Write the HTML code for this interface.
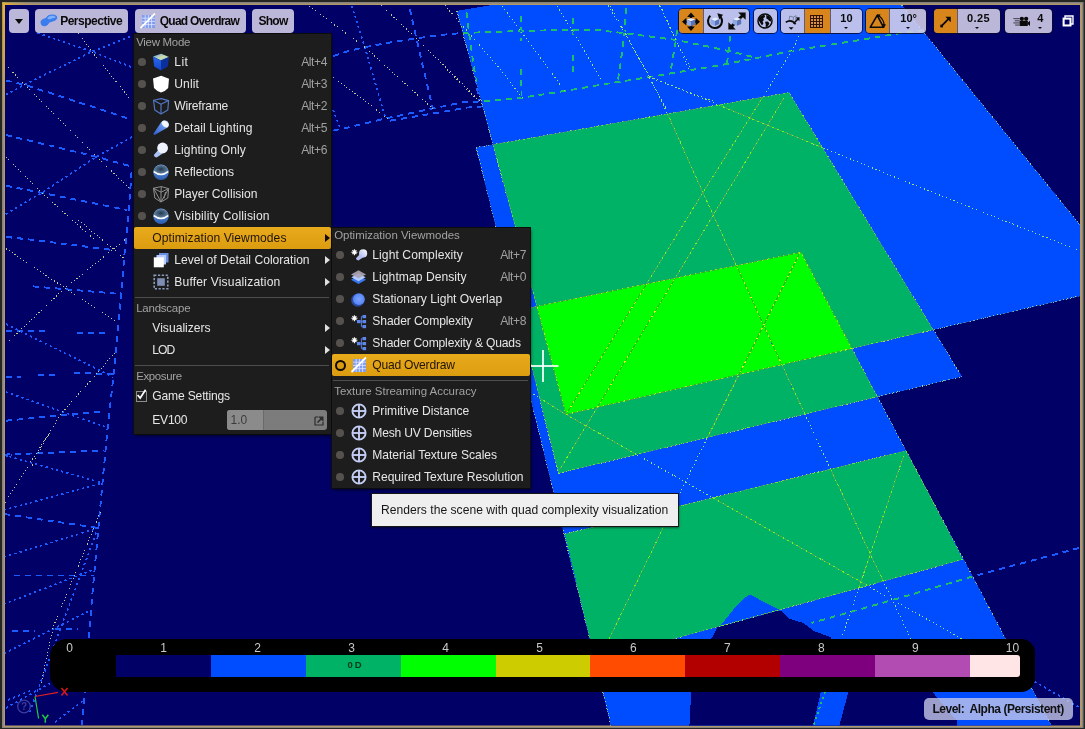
<!DOCTYPE html>
<html>
<head>
<meta charset="utf-8">
<title>Quad Overdraw Viewport</title>
<style>
html,body{margin:0;padding:0;}
body{width:1085px;height:729px;overflow:hidden;background:#262622;position:relative;font-family:"Liberation Sans",sans-serif;font-size:12px;}
#scene{position:absolute;left:0;top:0;}
.abs{position:absolute;}
#ui{position:absolute;left:0;top:0;width:1085px;height:729px;will-change:transform;}
/* toolbar */
.tb{position:absolute;top:9px;height:24px;border-radius:4px;background:rgba(212,208,232,0.88);box-sizing:border-box;overflow:hidden;}
.tb.dk{box-shadow:0 0 0 1px rgba(10,10,40,0.85);}
.tbt{position:absolute;top:0.9px;height:24px;line-height:23px;font-weight:bold;font-size:12px;color:#0a0a0a;white-space:pre;letter-spacing:-0.5px;}
.seg{position:absolute;top:0;height:24px;}
.or{background:#d8861c;box-shadow:0 0 0 1px rgba(20,10,40,0.55);}
.num{position:absolute;top:0;height:24px;text-align:center;font-weight:bold;font-size:11px;color:#0a0a0a;line-height:19px;}
.dn{position:absolute;width:0;height:0;border-left:2.6px solid transparent;border-right:2.6px solid transparent;border-top:2.8px solid #0a0a0a;top:18px;}
/* menus */
.menu{position:absolute;background:#1d1d1d;box-shadow:0 0 0 1px #0c0c0c, 1px 2px 3px rgba(0,0,0,0.6);color:#e6e6e6;}
.hdr{position:absolute;left:2.2px;font-size:11.45px;color:#a2a2a2;white-space:pre;line-height:12px;}
.row{position:absolute;left:0;right:0;height:22px;}
.row .dot{position:absolute;left:4.2px;top:7.2px;width:7.6px;height:7.6px;border-radius:50%;background:#55514f;}
.row .ic{position:absolute;left:19px;top:3px;width:16px;height:16px;overflow:visible;}
.row .tx{position:absolute;left:40.3px;top:0.7px;line-height:21px;white-space:pre;font-size:12.1px;}
.row .tx2{position:absolute;left:18.3px;top:0.7px;line-height:21px;white-space:pre;font-size:12.1px;}
.row .sc{position:absolute;right:4px;top:0.7px;line-height:21px;color:#a0a0a0;font-size:12.1px;letter-spacing:-0.42px;}
.row .ar{position:absolute;right:1.5px;top:7px;width:0;height:0;border-top:4px solid transparent;border-bottom:4px solid transparent;border-left:5px solid #e0e0e0;}
.row.hl{background:linear-gradient(#e8ab1c,#dc9c10);border-radius:2px;color:#20140a;}
.row.hl .ar{border-left-color:#120a04;}
.sep{position:absolute;left:1px;right:2px;height:1px;background:#4e4e4e;}
</style>
</head>
<body>
<svg id="scene" width="1085" height="729" viewBox="0 0 1085 729">
<defs>
  <clipPath id="vp"><rect x="5" y="5" width="1075" height="720.5"/></clipPath>
  <polygon id="pA" points="456.8,10.8 491.5,5 901.7,5 1128.5,284.7 566,414.5"/>
  <polygon id="pB" points="476,147.6 789,92.4 961.8,376.6 558.6,473.3"/>
  <polygon id="pC" points="509.4,312 801,252.3 1051.5,725.5 611,725.5"/>
  <polygon id="pD" points="564.9,534 907.3,450.3 962.8,559.5 595.1,660.5"/>
  <clipPath id="cA"><use href="#pA"/></clipPath>
  <clipPath id="cB"><use href="#pB"/></clipPath>
  <clipPath id="cC"><use href="#pC"/></clipPath>
  <clipPath id="cD"><use href="#pD"/></clipPath>
</defs>
<!-- frame -->
<rect x="0" y="0" width="1085" height="729" fill="#262622"/>
<rect x="2" y="2" width="1081.5" height="726" fill="#858280"/>
<rect x="3.5" y="3.5" width="1078.5" height="723.5" fill="#b09868"/>
<defs><linearGradient id="gl" x1="0" y1="0" x2="0" y2="1"><stop offset="0" stop-color="#eab22c"/><stop offset="0.35" stop-color="#d8a640" stop-opacity="0.9"/><stop offset="1" stop-color="#b09868" stop-opacity="0"/></linearGradient><linearGradient id="gt" x1="0" y1="0" x2="1" y2="0"><stop offset="0" stop-color="#eab22c"/><stop offset="1" stop-color="#b09868" stop-opacity="0"/></linearGradient></defs>
<rect x="2.6" y="2.6" width="2.6" height="150" fill="url(#gl)"/><rect x="2.6" y="2.6" width="34" height="2.6" fill="url(#gt)"/>
<g clip-path="url(#vp)" shape-rendering="crispEdges">
  <rect x="5" y="5" width="1075" height="721" fill="#000066"/>
  <!-- single planes : blue -->
  <use href="#pA" fill="#004cff"/>
  <use href="#pB" fill="#004cff"/>
  <use href="#pC" fill="#004cff"/>
  <!-- double overlaps : green -->
  <g clip-path="url(#cA)"><use href="#pB" fill="#00b266"/><use href="#pC" fill="#00b266"/></g>
  <g clip-path="url(#cB)"><use href="#pC" fill="#00b266"/></g>
  <g clip-path="url(#cC)"><use href="#pD" fill="#00b266"/></g>
  <!-- triple -->
  <g clip-path="url(#cA)"><g clip-path="url(#cB)"><use href="#pC" fill="#00ff00"/></g></g>
  <!-- character silhouette -->
  <polygon points="710.7,640 720.4,625.7 737,605 748,595.3 750.8,594.5 759,599.4 770,605 778.4,609 781,610.5 832,640" fill="#004cff"/>
  <polygon points="710.7,640 717.6,627 778.4,610.5 781,610.5 789.5,618.8 803.3,623 814.4,631.2 831,637.3 832,640" fill="#000066"/>
  <polygon points="691.3,690 930.7,690 957,721 957,726 689.4,726" fill="#000066"/>
  <polygon points="821.3,690 849,690 839.2,726 813,726" fill="#004cff"/>
</g>
<g id="wires" clip-path="url(#vp)" fill="none">
<defs>
<g id="wth" stroke-width="1.9" stroke-dasharray="6 5"><polyline points="333,56 349,51 365,47.2 388,42.8 416,38.4 440,35 462,33 521,31 573,29.8 600,30.4 625,33.2 650,36.5 676,40 703,45.5 728.6,51 757.6,58"/><polyline points="333,130.6 344,128.4 385.6,118.5 431.7,108.7 464.7,102 479.5,101.5 521.5,97.8 567,90.6 603,84.4 648.5,77.2 686.8,70.7 721.6,65 757,58 790.8,51 860,40 900,33.2 925,30"/><polyline points="390,120.7 436,113 466.8,107.6 482,106.5"/><polyline points="409.8,8.8 416.4,38.4 432.8,108.7"/><polyline points="466.4,12 470,40 476,81.5 479,101"/><polyline points="521,15.6 521,40.7"/><polyline points="521.3,69.5 521.5,98"/><polyline points="573,18 573,36"/><polyline points="573,55 573,73"/><polyline points="626,8 624.5,33 621,60 618,80"/><polyline points="677,30 676,40 672.5,60 670.5,72"/><polyline points="730,36 728.6,51 727,63.6"/><polyline points="131.5,172 131,180 127,232 125,248 118,330 113,380 107.4,430 102.5,483 98.4,528 94.3,573 91,610 84,700 82,725"/><polyline points="5.8,80.4 24.5,84.7 131,119.3"/><polyline points="5.8,135 96.5,156.8 132.5,166.8"/><polyline points="5.8,185.6 41.8,192.8 126.8,210"/><polyline points="5.8,237 28,239.5"/><polyline points="6,236.6 113,250"/><polyline points="33,286.4 120.7,294"/><polyline points="6,331 45,331"/><polyline points="77,333 107,333"/><polyline points="6,377 21,377"/><polyline points="37.7,374.8 56,374.8"/><polyline points="74,373 113,374"/><polyline points="6,420.7 99.6,411.6"/><polyline points="4,454.6 104.5,450.5"/><polyline points="4,514 98.4,528"/><polyline points="14.3,575.5 94.3,575.5"/><polyline points="12.3,630.8 34.8,630.8"/><polyline points="55.3,628.8 77.9,628.8"/><polyline points="1079,548 974,576 892.5,600 811.6,623"/></g>
<g id="wdt" stroke-width="1.7" stroke-dasharray="2.2 3.2"><polyline points="351.6,5.5 364.8,47.2 385.6,118.5"/><polyline points="333,109.8 340.6,129.5"/><polyline points="37.5,33 92,51.6 132.5,67.5"/><polyline points="5.8,94.8 24.5,84.7 92,51.6 132.5,35.8"/><polyline points="5.8,214 41.8,192.8 96.5,156.8 132.5,136.6"/><polyline points="6,324 113,377"/><polyline points="6,392 108.6,428"/><polyline points="4,455 102.5,483"/><polyline points="4,510 102.5,483"/><polyline points="4,557 98.4,528"/><polyline points="4,604 94.3,569.3"/><polyline points="4,653.4 91,610"/><polyline points="96.3,532.5 36.9,692.3 30,712"/><polyline points="8,700 32,690"/><polyline points="6,708 56,680"/><polyline points="55,722 84,700"/><polyline points="1034.7,681.7 1079,707.3"/><polyline points="825,691.8 813.7,725"/><polyline points="5.8,456.5 12,455"/></g>
<g id="wall"><use href="#wth"/><use href="#wdt"/></g>
<g id="wtn" stroke-width="1"><polyline points="5.8,64.6 24.5,84.7 96.5,156.8 129.6,188.5"/><polyline points="77.8,33 92,51.6 132.5,102"/><polyline points="5.8,156.8 41.8,192.8 95,240"/><polyline points="78.5,220 125,259"/><polyline points="6,248.7 65,288 117.7,322.6"/><polyline points="125,239.6 65,288 19.6,331 6,343.7"/><polyline points="114.7,352.8 96.6,374 60.3,414.6 45.3,440 30,470"/><polyline points="51.2,430 4,504"/><polyline points="100.4,512 53.3,626.7 41,684"/><polyline points="306.6,4.4 364.8,47.2 432.8,108.7"/><polyline points="381.2,5.5 416.4,38.4 480,101"/><polyline points="333,76.8 387.8,118.5"/><polyline points="444.9,5.5 497.6,65.9 522.7,98.3"/><polyline points="502.3,6 564.6,90.6"/><polyline points="557.4,6 604,83.9"/><polyline points="610,6 649.7,77 666.4,111.3 702.9,192.6 739.4,272 763.7,325.5 825,457.3 870.3,554 911,639"/><polyline points="660.5,6 689,69.5"/><polyline points="440,62.3 478.3,100.6"/><polyline points="649.8,76.5 766,124.6 901.9,180 1079.7,250.8"/><polyline points="799,36 792.4,50 702.9,192.6 566,414.5"/><polyline points="784,98 712.8,215.8 559.5,470"/><polyline points="800,252.4 691.3,470 609,639"/><polyline points="530,392 566,414.5 840,570 955.4,635.4 1000,661"/><polyline points="903.6,455.9 870.3,554 842.6,635.4"/><polyline points="648.4,77.4 716,102"/><polyline points="608,5.5 625,33 666,108"/><polyline points="659.4,5.5 676,40 691,69"/><polyline points="456.8,10.8 566,414.5 1128.5,284.7"/><polyline points="901.7,5 1128.5,284.7"/><polyline points="476,147.6 789,92.4 961.8,376.6 558.6,473.3 476,147.6"/><polyline points="611,725.5 509.4,312 801,252.3 1051.5,725.5"/><polyline points="564.9,534 907.3,450.3"/><polyline points="962.8,559.5 673.4,639"/></g>
</defs>
<g shape-rendering="crispEdges">
<use href="#wall" stroke="#1a5cff"/>
<g clip-path="url(#cA)"><use href="#wall" stroke="#1cc06a"/></g>
<g clip-path="url(#cB)"><use href="#wall" stroke="#1cc06a"/></g>
<g clip-path="url(#cC)"><use href="#wall" stroke="#1cc06a"/></g>
<g clip-path="url(#cA)"><g clip-path="url(#cB)"><use href="#wall" stroke="#30ff20"/></g></g>
<g clip-path="url(#cA)"><g clip-path="url(#cC)"><use href="#wall" stroke="#30ff20"/></g></g>
<g clip-path="url(#cB)"><g clip-path="url(#cC)"><use href="#wall" stroke="#30ff20"/></g></g>
<g clip-path="url(#cC)"><g clip-path="url(#cD)"><use href="#wall" stroke="#30ff20"/></g></g>
<use href="#wtn" stroke="#cfdf9a" stroke-dasharray="1 2.4" opacity="0.9"/>
<g clip-path="url(#cA)"><use href="#wtn" stroke="#004cff"/><use href="#wtn" stroke="#9be070" stroke-dasharray="1.2 2.8"/></g>
<g clip-path="url(#cB)"><use href="#wtn" stroke="#004cff"/><use href="#wtn" stroke="#9be070" stroke-dasharray="1.2 2.8"/></g>
<g clip-path="url(#cC)"><use href="#wtn" stroke="#004cff"/><use href="#wtn" stroke="#9be070" stroke-dasharray="1.2 2.8"/></g>
<g clip-path="url(#cA)"><g clip-path="url(#cB)"><use href="#wtn" stroke="#55a458"/><use href="#wtn" stroke="#62ff1c" stroke-width="1.5" stroke-dasharray="1.5 3.8"/></g></g>
<g clip-path="url(#cA)"><g clip-path="url(#cC)"><use href="#wtn" stroke="#55a458"/><use href="#wtn" stroke="#62ff1c" stroke-width="1.5" stroke-dasharray="1.5 3.8"/></g></g>
<g clip-path="url(#cB)"><g clip-path="url(#cC)"><use href="#wtn" stroke="#55a458"/><use href="#wtn" stroke="#62ff1c" stroke-width="1.5" stroke-dasharray="1.5 3.8"/></g></g>
<g clip-path="url(#cC)"><g clip-path="url(#cD)"><use href="#wtn" stroke="#55a458"/><use href="#wtn" stroke="#62ff1c" stroke-width="1.5" stroke-dasharray="1.5 3.8"/></g></g>
<g clip-path="url(#cA)"><g clip-path="url(#cB)"><g clip-path="url(#cC)"><use href="#wtn" stroke="#22c010"/><use href="#wtn" stroke="#ecec18" stroke-width="1.5" stroke-dasharray="1.5 3.8"/></g></g></g>
</g>
</g>
</svg>

<div id="ui">
<div class="abs" style="left:50px;top:639px;width:985px;height:53px;background:#000;border-radius:17px 14px 14px 17px;"></div>
<div class="abs" style="left:116.00px;top:655px;width:95.40px;height:21.6px;background:#000066;"></div>
<div class="abs" style="left:211.00px;top:655px;width:95.10px;height:21.6px;background:#004cff;"></div>
<div class="abs" style="left:305.70px;top:655px;width:95.40px;height:21.6px;background:#00b266;"></div>
<div class="abs" style="left:400.70px;top:655px;width:95.70px;height:21.6px;background:#00ff00;"></div>
<div class="abs" style="left:496.00px;top:655px;width:94.70px;height:21.6px;background:#cccc00;"></div>
<div class="abs" style="left:590.30px;top:655px;width:95.30px;height:21.6px;background:#ff4c00;"></div>
<div class="abs" style="left:685.20px;top:655px;width:95.20px;height:21.6px;background:#b20000;"></div>
<div class="abs" style="left:780.00px;top:655px;width:95.40px;height:21.6px;background:#7f007f;"></div>
<div class="abs" style="left:875.00px;top:655px;width:95.20px;height:21.6px;background:#b24cb2;"></div>
<div class="abs" style="left:969.80px;top:655px;width:49.80px;height:21.6px;background:#ffe5e5;border-radius:0 3px 3px 0;"></div>
<div class="abs" style="left:49.7px;top:640.5px;width:40px;text-align:center;color:#c9c9c9;font-size:12px;line-height:14px;">0</div>
<div class="abs" style="left:143.7px;top:640.5px;width:40px;text-align:center;color:#c9c9c9;font-size:12px;line-height:14px;">1</div>
<div class="abs" style="left:237.6px;top:640.5px;width:40px;text-align:center;color:#c9c9c9;font-size:12px;line-height:14px;">2</div>
<div class="abs" style="left:331.6px;top:640.5px;width:40px;text-align:center;color:#c9c9c9;font-size:12px;line-height:14px;">3</div>
<div class="abs" style="left:425.5px;top:640.5px;width:40px;text-align:center;color:#c9c9c9;font-size:12px;line-height:14px;">4</div>
<div class="abs" style="left:519.5px;top:640.5px;width:40px;text-align:center;color:#c9c9c9;font-size:12px;line-height:14px;">5</div>
<div class="abs" style="left:613.4px;top:640.5px;width:40px;text-align:center;color:#c9c9c9;font-size:12px;line-height:14px;">6</div>
<div class="abs" style="left:707.4px;top:640.5px;width:40px;text-align:center;color:#c9c9c9;font-size:12px;line-height:14px;">7</div>
<div class="abs" style="left:801.3px;top:640.5px;width:40px;text-align:center;color:#c9c9c9;font-size:12px;line-height:14px;">8</div>
<div class="abs" style="left:895.3px;top:640.5px;width:40px;text-align:center;color:#c9c9c9;font-size:12px;line-height:14px;">9</div>
<div class="abs" style="left:992.5px;top:640.5px;width:40px;text-align:center;color:#c9c9c9;font-size:12px;line-height:14px;">10</div>
<div class="abs" style="left:342px;top:660px;width:24px;text-align:center;color:#06381a;font-size:9.5px;font-weight:bold;line-height:10px;letter-spacing:1.9px;padding-left:1.5px;">0D</div>
<div class="abs" style="left:924px;top:698px;width:149px;height:22px;border-radius:5px;background:rgba(200,202,232,0.78);"></div>
<div class="abs" style="left:932.4px;top:698px;height:22px;line-height:22px;font-weight:bold;font-size:12px;color:#101010;white-space:pre;letter-spacing:-0.47px;">Level:  Alpha (Persistent)</div>
<svg class="abs" style="left:0;top:669px" width="90" height="60" viewBox="0 669 90 60"><g fill="none"><line x1="35" y1="696.5" x2="58" y2="692.3" stroke="#e02020" stroke-width="1.2"/><line x1="35" y1="696.5" x2="38.6" y2="718.5" stroke="#20d040" stroke-width="1.2"/><path d="M61.5,688 L67.5,695.5 M67.5,688 L61.5,695.5" stroke="#d81818" stroke-width="1.5"/><path d="M42.3,714.8 L45.3,718.8 L48.3,714.8 M45.3,718.8 L45.3,722.8" stroke="#20c840" stroke-width="1.5"/><circle cx="24" cy="706.5" r="6.3" stroke="#3c3ca0" stroke-width="1.3"/></g><text x="24" y="710.3" font-size="10" font-weight="bold" fill="#3c3ca0" text-anchor="middle" font-family="Liberation Sans">?</text></svg>
<div class="tb" style="left:9px;width:20px;"><div class="abs" style="left:5.5px;top:9.5px;width:0;height:0;border-left:4.5px solid transparent;border-right:4.5px solid transparent;border-top:5px solid #0a0a0a;"></div></div>
<div class="tb" style="left:35px;width:93px;"><svg class="abs" style="left:5px;top:5px" width="18" height="13" viewBox="0 0 18 13"><path d="M1,9 Q0.5,6.5 3,5.5 L6,4.3 Q7.5,1.2 11,1 L14,1 Q17.3,1.5 16.8,4.2 Q16.5,6 13.5,6.8 L9.5,8 L7,11 Q4,12.8 1.8,11 Z" fill="#3b7dee" stroke="#3b7dee" stroke-width="0.9" stroke-linejoin="round"/><path d="M7.2,4.2 Q8.5,1.8 11,1.7 L13.8,1.8 Q15.8,2.3 15.6,3.6 L9,5.5 Z" fill="#7fb0fb"/></svg><span class="tbt" style="left:25.2px;">Perspective</span></div>
<div class="tb" style="left:134.5px;width:111px;"><svg class="abs" style="left:5.5px;top:4px" width="16" height="16" viewBox="0 0 16 16"><rect x="2" y="2" width="13" height="13" fill="#7f9cf0"/><g stroke="#dfe6ff" stroke-width="0.8"><line x1="5.2" y1="2" x2="5.2" y2="15"/><line x1="8.4" y1="2" x2="8.4" y2="15"/><line x1="11.6" y1="2" x2="11.6" y2="15"/><line x1="2" y1="5.2" x2="15" y2="5.2"/><line x1="2" y1="8.4" x2="15" y2="8.4"/><line x1="2" y1="11.6" x2="15" y2="11.6"/></g><line x1="0.5" y1="15" x2="15" y2="0.5" stroke="#ffffff" stroke-width="1.8"/></svg><span class="tbt" style="left:25.3px;letter-spacing:-0.78px;">Quad Overdraw</span></div>
<div class="tb" style="left:252px;width:41.6px;"><span class="tbt" style="left:6.5px;letter-spacing:-0.75px;">Show</span></div>
<div class="tb dk" style="left:679px;width:70.29999999999995px;"><div class="seg or" style="left:0px;width:23.5px;"><svg class="abs" style="left:2.7px;top:2.5px" width="18" height="19" viewBox="-9 -9.5 18 19"><g fill="#0a0a0a"><polygon points="0,-9 3.9,-4.6 -3.9,-4.6"/><polygon points="0,9.4 3.9,5 -3.9,5"/><polygon points="-9,0.2 -4.6,-3.7 -4.6,4.1"/><polygon points="9,0.2 4.6,-3.7 4.6,4.1"/><rect x="-1.2" y="-5.5" width="2.4" height="11.5"/><rect x="-5.5" y="-1" width="11" height="2.4"/></g><polygon points="0,-3.6 4.2,-1.9 0,0 -4.2,-1.9" fill="#e4ecff"/><polygon points="-4.2,-1.9 0,0 0,4.8 -4.2,2.9" fill="#8ea8e6"/><polygon points="4.2,-1.9 0,0 0,4.8 4.2,2.9" fill="#5a74bc"/></svg></div><div class="seg" style="left:23.5px;width:23.5px;"><svg class="abs" style="left:2px;top:1px" width="20" height="22" viewBox="-10 -11 20 22"><path d="M-4.6,-5.2 A7,7 0 1 0 5.4,-4.4" fill="none" stroke="#0a0a0a" stroke-width="2.1"/><polygon points="2.3,-7.8 8,-6.3 4.4,-1.6" fill="#0a0a0a"/><polygon points="0,-3.6 4.2,-1.9 0,0 -4.2,-1.9" fill="#e4ecff"/><polygon points="-4.2,-1.9 0,0 0,4.8 -4.2,2.9" fill="#8ea8e6"/><polygon points="4.2,-1.9 0,0 0,4.8 4.2,2.9" fill="#5a74bc"/></svg></div><div class="seg" style="left:47px;width:23.3px;"><svg class="abs" style="left:2.4px;top:3px" width="18" height="18" viewBox="-9 -9 18 18"><g fill="#0a0a0a"><polygon points="8.6,-8.6 8.6,-1.2 1.2,-8.6"/><polygon points="-8.6,8.6 -8.6,1.2 -1.2,8.6"/></g><line x1="-5.5" y1="5.5" x2="5.5" y2="-5.5" stroke="#0a0a0a" stroke-width="2.8"/><polygon points="0,-3.6 4.2,-1.9 0,0 -4.2,-1.9" fill="#e4ecff"/><polygon points="-4.2,-1.9 0,0 0,4.8 -4.2,2.9" fill="#8ea8e6"/><polygon points="4.2,-1.9 0,0 0,4.8 4.2,2.9" fill="#5a74bc"/></svg></div></div>
<div class="tb dk" style="left:754px;width:22.5px;"><svg class="abs" style="left:3.3px;top:4px" width="16" height="16" viewBox="0 0 16 16"><circle cx="8" cy="8" r="7" fill="none" stroke="#0a0a0a" stroke-width="1.5"/><path d="M2.2,4.5 Q4,1.8 7.5,1.6 L8,4 L6.2,5.2 L7,7.2 L5.6,8 L6.4,10.5 L5,12.6 L3,9.6 L1.6,7 Z M9.2,2 L12.2,3 L14,6 L14,8.5 L12.4,8 L11,6.6 L9.4,5.6 Z M8,8.8 L11,8.6 L12.4,10.6 L10.6,13.8 L8.6,14 L8.8,11.6 Z" fill="#0a0a0a"/></svg></div>
<div class="tb dk" style="left:781px;width:80.60000000000002px;"><div class="seg" style="left:0px;width:23.6px;"><svg class="abs" style="left:2px;top:2px" width="22" height="22" viewBox="0 0 22 22"><g fill="none" stroke="#6a7290" stroke-width="0.8"><path d="M6,9.5 L6.8,5 L10.5,6.2 L13,4.6 L12.6,9"/><path d="M10.5,6.2 L10,10.5"/></g><path d="M2.8,11.2 Q8.5,7.6 12.6,13.2" fill="none" stroke="#0a0a0a" stroke-width="1.7"/><line x1="10.5" y1="12.6" x2="15" y2="8" stroke="#0a0a0a" stroke-width="1.5"/><polygon points="16.6,6.2 16.4,10.2 12.8,6.6" fill="#0a0a0a"/><polygon points="5.6,16.2 10.6,16.2 8.1,18.8" fill="#0a0a0a"/></svg></div><div class="seg or" style="left:23.6px;width:25.2px;"><svg class="abs" style="left:5.2px;top:6px" width="13" height="13" viewBox="0 0 13 13"><rect x="0.5" y="0.5" width="12" height="12" fill="#e49c4c"/><g stroke="#341400" stroke-width="1.1" fill="none"><rect x="0.55" y="0.55" width="11.9" height="11.9"/><line x1="3.5" y1="0" x2="3.5" y2="13"/><line x1="6.5" y1="0" x2="6.5" y2="13"/><line x1="9.5" y1="0" x2="9.5" y2="13"/><line x1="0" y1="3.5" x2="13" y2="3.5"/><line x1="0" y1="6.5" x2="13" y2="6.5"/><line x1="0" y1="9.5" x2="13" y2="9.5"/></g></svg></div><div class="num" style="left:49.5px;width:31.8px;">10</div><div class="dn" style="left:62.6px;"></div></div>
<div class="tb dk" style="left:866px;width:60px;"><div class="seg or" style="left:0px;width:23.2px;"><svg class="abs" style="left:0;top:0" width="23" height="24" viewBox="0 0 23 24"><path d="M4.2,18.3 L11.2,6.4 L17.6,18.3 Z" fill="none" stroke="#0a0a0a" stroke-width="1.6" stroke-linejoin="round"/><path d="M12.6,6.8 Q17.6,10 18.2,16" fill="none" stroke="#0a0a0a" stroke-width="1.2"/><polygon points="16.2,15 20,15.4 18,18.8" fill="#0a0a0a"/><polygon points="10.8,5.2 14.6,5.6 12.6,8.8" fill="#0a0a0a"/></svg></div><div class="num" style="left:24.2px;width:36.8px;">10°</div><div class="dn" style="left:39.6px;"></div></div>
<div class="tb dk" style="left:933.6px;width:66.39999999999998px;"><div class="seg or" style="left:0px;width:23.4px;"><svg class="abs" style="left:5px;top:6px" width="13.5" height="13.5" viewBox="0 0 17 17"><line x1="4" y1="13" x2="12" y2="5" stroke="#0a0a0a" stroke-width="2.3"/><polygon points="14.8,2.2 14.8,9 8,2.2" fill="#0a0a0a"/><rect x="1.6" y="12.2" width="3.4" height="3.4" fill="#0a0a0a"/></svg></div><div class="num" style="left:23.4px;width:43px;letter-spacing:0.45px;">0.25</div><div class="dn" style="left:41.9px;"></div></div>
<div class="tb dk" style="left:1005px;width:47px;"><svg class="abs" style="left:8px;top:6.5px" width="17" height="11.5" viewBox="0 0 24 16"><g fill="#0a0a0a"><circle cx="12.5" cy="3.8" r="3"/><circle cx="18.6" cy="3.8" r="3"/><rect x="9.5" y="6.5" width="11.5" height="7.5" rx="1"/><polygon points="21,9 24,6.6 24,14 21,11.6"/><rect x="0.5" y="3" width="9" height="1.3" opacity="0.75"/><rect x="2.5" y="6" width="7" height="1.3" opacity="0.75"/><rect x="0.5" y="9" width="9" height="1.3" opacity="0.75"/><rect x="3" y="12" width="6.5" height="1.3" opacity="0.75"/></g></svg><div class="num" style="left:26.3px;width:18px;">4</div><div class="dn" style="left:32.5px;"></div></div>
<svg class="abs" style="left:1062px;top:15px" width="12" height="12" viewBox="0 0 14 14"><path d="M3.5,3.5 V1.2 H12.8 V10.5 H10.5" fill="none" stroke="#ffffff" stroke-width="1.6"/><rect x="1.9" y="4.2" width="8" height="8" fill="none" stroke="#ffffff" stroke-width="2.4"/></svg>
<div class="menu" style="left:134px;top:34px;width:197px;height:400px;"><div class="hdr" style="top:2px;letter-spacing:-0.28px;">View Mode</div><div class="row" style="top:17px"><div class="dot"></div><svg class="ic" viewBox="0 0 16 16"><defs><linearGradient id="lt1" x1="0" y1="0" x2="1" y2="1"><stop offset="0" stop-color="#5f9cf6"/><stop offset="0.55" stop-color="#cfe0a8"/><stop offset="1" stop-color="#6fa4f4"/></linearGradient><linearGradient id="lt2" x1="0" y1="0" x2="0" y2="1"><stop offset="0" stop-color="#2a6af0"/><stop offset="1" stop-color="#1444c8"/></linearGradient></defs><polygon points="8.2,-0.3 16,3 8,6.6 0,2.6" fill="url(#lt1)"/><polygon points="0,2.6 8,6.6 8,16.6 1.2,12.6" fill="url(#lt2)"/><polygon points="16,3 8,6.6 8,16.6 14.8,12.6" fill="#0c2f9e"/></svg><span class="tx" style="letter-spacing:0.403px">Lit</span><span class="sc">Alt+4</span></div><div class="row" style="top:39px"><div class="dot"></div><svg class="ic" viewBox="0 0 16 16"><path d="M8.2,-0.2 L16,2.8 L15.2,12 Q12,15.6 8,16.6 Q4,15.4 1,12 L0,2.6 Z" fill="#ffffff"/></svg><span class="tx" style="letter-spacing:0.079px">Unlit</span><span class="sc">Alt+3</span></div><div class="row" style="top:61px"><div class="dot"></div><svg class="ic" viewBox="0 0 16 16"><g fill="none" stroke="#5278c8" stroke-width="1.15" stroke-linejoin="round"><polygon points="0.5,2.2 8.3,0.6 15.6,2.6 14.8,12 8,16 1.8,12"/><polyline points="0.5,2.2 8,6.2 15.6,2.6"/><line x1="8" y1="6.2" x2="8" y2="16"/></g></svg><span class="tx" style="letter-spacing:-0.22px">Wireframe</span><span class="sc">Alt+2</span></div><div class="row" style="top:83px"><div class="dot"></div><svg class="ic" viewBox="0 0 16 16"><defs><linearGradient id="dl1" x1="0" y1="1" x2="1" y2="0"><stop offset="0" stop-color="#2a58c8"/><stop offset="0.7" stop-color="#6f9cf4"/><stop offset="1" stop-color="#a8c8ff"/></linearGradient></defs><path d="M0.2,14 L8,2.4 Q10.5,-0.4 14.2,1 Q16.8,3.6 15,7.2 L1.6,15 Z" fill="url(#dl1)"/><ellipse cx="12.2" cy="4" rx="3.9" ry="2.7" transform="rotate(38 12.2 4)" fill="#f2f7ff"/></svg><span class="tx" style="letter-spacing:0.11px">Detail Lighting</span><span class="sc">Alt+5</span></div><div class="row" style="top:105px"><div class="dot"></div><svg class="ic" viewBox="0 0 16 16"><path d="M5.2,8 L0.8,13 Q1,15.2 3.6,15.6 L9.6,11.6 Z" fill="#a9c2f2"/><circle cx="9.6" cy="6" r="5.4" fill="#eef3ff"/></svg><span class="tx" style="letter-spacing:0.07px">Lighting Only</span><span class="sc">Alt+6</span></div><div class="row" style="top:127px"><div class="dot"></div><svg class="ic" viewBox="0 0 16 16"><defs><radialGradient id="rf1" cx="0.5" cy="0.45" r="0.6"><stop offset="0" stop-color="#22384e"/><stop offset="0.75" stop-color="#5f7f9e"/><stop offset="1" stop-color="#b8cce0"/></radialGradient><linearGradient id="rf2" x1="0" y1="0" x2="0" y2="1"><stop offset="0" stop-color="#6fa6ee"/><stop offset="1" stop-color="#2a5cb0"/></linearGradient></defs><circle cx="8" cy="8.2" r="7.7" fill="url(#rf2)"/><path d="M0.4,7.4 A7.7,7.7 0 0 1 15.6,7.4 Q8,13.2 0.4,7.4Z" fill="url(#rf1)"/><path d="M0.9,7.6 Q8,13.4 15.1,7.6" fill="none" stroke="#ffffff" stroke-width="1.5"/></svg><span class="tx" style="letter-spacing:-0.012px">Reflections</span></div><div class="row" style="top:149px"><div class="dot"></div><svg class="ic" viewBox="0 0 16 16"><g fill="none" stroke="#8e8e8e" stroke-width="1" stroke-linejoin="round"><polygon points="0.5,2.2 8.3,0.6 15.6,2.6 14.8,12 8,16 1.8,12"/><polyline points="0.5,2.2 8,6.2 15.6,2.6"/><line x1="8" y1="6.2" x2="8" y2="16"/><line x1="0.5" y1="2.2" x2="8" y2="16"/><line x1="15.6" y1="2.6" x2="8" y2="16"/><line x1="8.3" y1="0.6" x2="8" y2="6.2"/><line x1="11" y1="12.5" x2="12.5" y2="6"/></g></svg><span class="tx" style="letter-spacing:-0.01px">Player Collision</span></div><div class="row" style="top:171px"><div class="dot"></div><svg class="ic" viewBox="0 0 16 16"><defs><radialGradient id="rf1" cx="0.5" cy="0.45" r="0.6"><stop offset="0" stop-color="#22384e"/><stop offset="0.75" stop-color="#5f7f9e"/><stop offset="1" stop-color="#b8cce0"/></radialGradient><linearGradient id="rf2" x1="0" y1="0" x2="0" y2="1"><stop offset="0" stop-color="#6fa6ee"/><stop offset="1" stop-color="#2a5cb0"/></linearGradient></defs><circle cx="8" cy="8.2" r="7.7" fill="url(#rf2)"/><path d="M0.4,7.4 A7.7,7.7 0 0 1 15.6,7.4 Q8,13.2 0.4,7.4Z" fill="url(#rf1)"/><path d="M0.9,7.6 Q8,13.4 15.1,7.6" fill="none" stroke="#ffffff" stroke-width="1.5"/></svg><span class="tx" style="letter-spacing:0.143px">Visibility Collision</span></div><div class="row hl" style="top:193px"><span class="tx2" style="letter-spacing:0.06px">Optimization Viewmodes</span><div class="ar"></div></div><div class="row" style="top:215px"><svg class="ic" viewBox="0 0 16 16"><rect x="6" y="1" width="9.5" height="9.5" fill="#6b8fe0"/><rect x="3.5" y="3" width="9.5" height="9.5" fill="#b8ccff"/><rect x="0.8" y="5.3" width="10" height="10" fill="#ffffff"/></svg><span class="tx" style="letter-spacing:0.007px">Level of Detail Coloration</span><div class="ar"></div></div><div class="row" style="top:237px"><svg class="ic" viewBox="0 0 16 16"><rect x="4.2" y="4.2" width="7.6" height="7.6" fill="#7d8db4"/><rect x="1.2" y="1.2" width="13.6" height="13.6" fill="none" stroke="#8e9cc0" stroke-width="1.6" stroke-dasharray="2.2,1.6"/></svg><span class="tx" style="letter-spacing:0.15px">Buffer Visualization</span><div class="ar"></div></div><div class="sep" style="top:263px;"></div><div class="hdr" style="top:268px;letter-spacing:-0.2px;">Landscape</div><div class="row" style="top:283.1px"><span class="tx2" style="letter-spacing:0.012px">Visualizers</span><div class="ar"></div></div><div class="row" style="top:305px"><span class="tx2" style="letter-spacing:-0.992px">LOD</span><div class="ar"></div></div><div class="sep" style="top:331px;"></div><div class="hdr" style="top:336px;letter-spacing:-0.35px;">Exposure</div><div class="row" style="top:351px"><div class="abs" style="left:1.5px;top:5.5px;width:9px;height:9px;border:1px solid #8c8c8c;background:#202020;"></div><svg class="abs" style="left:1px;top:3px" width="13" height="13" viewBox="0 0 13 13"><path d="M2.6,7 L5.2,10 L10.6,1.8" fill="none" stroke="#ffffff" stroke-width="1.7"/></svg><span class="tx2" style="letter-spacing:-0.177px">Game Settings</span></div><div class="row" style="top:375.4px"><span class="tx2" style="letter-spacing:-0.263px">EV100</span><div class="abs" style="left:93px;top:0.7px;width:100px;height:20px;border-radius:3px;background:#7c7c7c;overflow:hidden;"><div class="abs" style="left:0;top:0;width:36px;height:20px;background:#8b8b8b;border-right:1px solid #6a6a6a;"></div><span class="abs" style="left:3.5px;top:0;line-height:20px;color:#3c3c3c;font-size:12px;">1.0</span><svg class="abs" style="left:87px;top:6px" width="10" height="10" viewBox="0 0 10 10"><path d="M1,1 H4 M1,1 V9 H9 V6" fill="none" stroke="#2c2c2c" stroke-width="1.2"/><polygon points="9.5,0.5 9.5,6 4,0.5" fill="#2c2c2c"/><line x1="3.5" y1="6.5" x2="7.5" y2="2.5" stroke="#2c2c2c" stroke-width="1.6"/></svg></div></div></div>
<div class="menu" style="left:332px;top:228px;width:198px;height:260px;"><div class="hdr" style="top:1.3px;">Optimization Viewmodes</div><div class="row" style="top:16px"><div class="dot"></div><svg class="ic" viewBox="0 0 16 16"><g stroke="#ffffff" stroke-width="1.1"><line x1="0.4" y1="5.2" x2="6.4" y2="5.2"/><line x1="3.4" y1="2.2" x2="3.4" y2="8.2"/><line x1="1.4" y1="3.2" x2="5.4" y2="7.2"/><line x1="5.4" y1="3.2" x2="1.4" y2="7.2"/></g><circle cx="3.4" cy="5.2" r="1.5" fill="#ffffff"/><defs><linearGradient id="lc1" x1="1" y1="0" x2="0" y2="1"><stop offset="0" stop-color="#ffffff"/><stop offset="1" stop-color="#a8b4ee"/></linearGradient></defs><path d="M8.8,7.2 L5,11.2 Q5,13.2 7.4,13.6 L12.8,10 Z" fill="#b4bef2"/><circle cx="12.1" cy="6.4" r="4.1" fill="url(#lc1)"/></svg><span class="tx" style="letter-spacing:0.075px">Light Complexity</span><span class="sc">Alt+7</span></div><div class="row" style="top:38px"><div class="dot"></div><svg class="ic" viewBox="0 0 16 16"><polygon points="7.5,6.8 15,10.8 7.5,15 0,10.8" fill="#3a76f0"/><polygon points="7.5,4.2 14.6,8.2 7.5,12.2 0.4,8.2" fill="#b2ccff"/><polygon points="7.5,1.2 15,5.4 7.5,9.2 0,5.4" fill="#aaa4b4" fill-opacity="0.92"/></svg><span class="tx" style="letter-spacing:0.054px">Lightmap Density</span><span class="sc">Alt+0</span></div><div class="row" style="top:60px"><div class="dot"></div><svg class="ic" viewBox="0 0 16 16"><defs><radialGradient id="sl1" cx="0.5" cy="0.5" r="0.5"><stop offset="0" stop-color="#7aa2ff"/><stop offset="1" stop-color="#5584f4"/></radialGradient></defs><circle cx="6.7" cy="9.2" r="6.5" fill="#2c4a9e"/><circle cx="7.9" cy="8.2" r="5.9" fill="url(#sl1)"/></svg><span class="tx" style="letter-spacing:0.01px">Stationary Light Overlap</span></div><div class="row" style="top:82px"><div class="dot"></div><svg class="ic" viewBox="0 0 16 16"><g stroke="#ffffff" stroke-width="1.1"><line x1="0.4" y1="5.2" x2="6.4" y2="5.2"/><line x1="3.4" y1="2.2" x2="3.4" y2="8.2"/><line x1="1.4" y1="3.2" x2="5.4" y2="7.2"/><line x1="5.4" y1="3.2" x2="1.4" y2="7.2"/></g><circle cx="3.4" cy="5.2" r="1.5" fill="#ffffff"/><g fill="#5f86ee"><rect x="11.5" y="2" width="3.6" height="3.2"/><rect x="11.5" y="7" width="3.6" height="3.2"/><rect x="11.5" y="12" width="3.6" height="3.2"/><rect x="6" y="7" width="3.6" height="3.2"/></g><g stroke="#5f86ee" stroke-width="0.9" fill="none"><polyline points="11.5,3.6 10.4,3.6 10.4,13.6 11.5,13.6"/><line x1="9.6" y1="8.6" x2="11.5" y2="8.6"/></g></svg><span class="tx" style="letter-spacing:-0.104px">Shader Complexity</span><span class="sc">Alt+8</span></div><div class="row" style="top:104px"><div class="dot"></div><svg class="ic" viewBox="0 0 16 16"><g stroke="#ffffff" stroke-width="1.1"><line x1="0.4" y1="5.2" x2="6.4" y2="5.2"/><line x1="3.4" y1="2.2" x2="3.4" y2="8.2"/><line x1="1.4" y1="3.2" x2="5.4" y2="7.2"/><line x1="5.4" y1="3.2" x2="1.4" y2="7.2"/></g><circle cx="3.4" cy="5.2" r="1.5" fill="#ffffff"/><g fill="#5f86ee"><rect x="11.5" y="2" width="3.6" height="3.2"/><rect x="11.5" y="7" width="3.6" height="3.2"/><rect x="11.5" y="12" width="3.6" height="3.2"/><rect x="6" y="7" width="3.6" height="3.2"/></g><g stroke="#5f86ee" stroke-width="0.9" fill="none"><polyline points="11.5,3.6 10.4,3.6 10.4,13.6 11.5,13.6"/><line x1="9.6" y1="8.6" x2="11.5" y2="8.6"/></g></svg><span class="tx" style="letter-spacing:-0.164px">Shader Complexity &amp; Quads</span></div><div class="row hl" style="top:126px"><div class="dot" style="left:2.5px;top:5.5px;width:7px;height:7px;background:#dc9c10;border:2px solid #100a04;"></div><svg class="ic" viewBox="0 0 16 16"><rect x="2" y="2" width="13" height="13" fill="#7f9cf0"/><g stroke="#dfe6ff" stroke-width="0.8"><line x1="5.2" y1="2" x2="5.2" y2="15"/><line x1="8.4" y1="2" x2="8.4" y2="15"/><line x1="11.6" y1="2" x2="11.6" y2="15"/><line x1="2" y1="5.2" x2="15" y2="5.2"/><line x1="2" y1="8.4" x2="15" y2="8.4"/><line x1="2" y1="11.6" x2="15" y2="11.6"/></g><line x1="0.5" y1="15" x2="15" y2="0.5" stroke="#ffffff" stroke-width="1.8"/></svg><span class="tx" style="letter-spacing:-0.229px">Quad Overdraw</span></div><div class="sep" style="top:152px;"></div><div class="hdr" style="top:156.8px;">Texture Streaming Accuracy</div><div class="row" style="top:172px"><div class="dot"></div><svg class="ic" viewBox="0 0 16 16"><g fill="none" stroke="#c4cdf4" stroke-width="1.9"><circle cx="8" cy="8" r="6.6"/><line x1="8" y1="1.4" x2="8" y2="14.6"/><line x1="1.4" y1="8" x2="14.6" y2="8"/></g></svg><span class="tx" style="letter-spacing:0.007px">Primitive Distance</span></div><div class="row" style="top:194px"><div class="dot"></div><svg class="ic" viewBox="0 0 16 16"><g fill="none" stroke="#c4cdf4" stroke-width="1.9"><circle cx="8" cy="8" r="6.6"/><line x1="8" y1="1.4" x2="8" y2="14.6"/><line x1="1.4" y1="8" x2="14.6" y2="8"/></g></svg><span class="tx" style="letter-spacing:-0.191px">Mesh UV Densities</span></div><div class="row" style="top:216px"><div class="dot"></div><svg class="ic" viewBox="0 0 16 16"><g fill="none" stroke="#c4cdf4" stroke-width="1.9"><circle cx="8" cy="8" r="6.6"/><line x1="8" y1="1.4" x2="8" y2="14.6"/><line x1="1.4" y1="8" x2="14.6" y2="8"/></g></svg><span class="tx" style="letter-spacing:-0.034px">Material Texture Scales</span></div><div class="row" style="top:238px"><div class="dot"></div><svg class="ic" viewBox="0 0 16 16"><g fill="none" stroke="#c4cdf4" stroke-width="1.9"><circle cx="8" cy="8" r="6.6"/><line x1="8" y1="1.4" x2="8" y2="14.6"/><line x1="1.4" y1="8" x2="14.6" y2="8"/></g></svg><span class="tx" style="letter-spacing:-0.044px">Required Texture Resolution</span></div></div>
<div class="abs" style="left:370.5px;top:492.5px;width:308px;height:34px;box-sizing:border-box;border:1.5px solid #151515;background:#efefef;box-shadow:0 1px 2px rgba(0,0,0,0.5);"><span class="abs" style="left:9.6px;top:0;line-height:33px;color:#161616;font-size:12.1px;white-space:pre;letter-spacing:0.016px;">Renders the scene with quad complexity visualization</span></div>
<svg class="abs" style="left:530px;top:350px" width="30" height="32" viewBox="530 350 30 32"><g stroke="#ffffff" stroke-width="1.7"><line x1="543" y1="349" x2="543" y2="382"/><line x1="531" y1="366" x2="558.5" y2="366"/></g></svg>
</div>
</body>
</html>
